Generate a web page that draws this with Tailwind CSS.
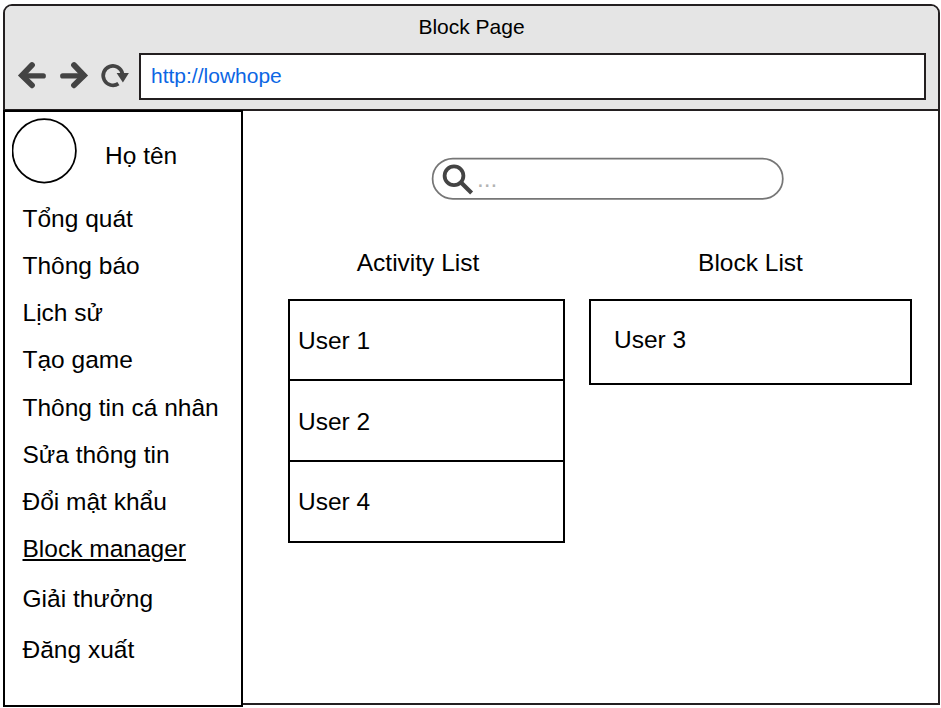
<!DOCTYPE html>
<html lang="vi">
<head>
<meta charset="utf-8">
<title>Block Page</title>
<script src="https://cdn.jsdelivr.net/npm/@tailwindcss/browser@4"></script>
</head>
<body class="w-[941px] h-[708px] overflow-hidden bg-white text-black font-['Liberation_Sans',Arial,sans-serif] text-[24.5px]">
<div class="w-[941px] h-[708px] pl-[3px] pt-[4px]">
  <div class="w-[937px] h-[701px] border-2 border-[#231f20] rounded-t-[9px] flex flex-col">
    <header class="h-[105px] shrink-0 bg-[#e5e5e5] border-b-2 border-[#231f20] rounded-t-[7px]">
      <h1 class="h-[47px] pt-[6px] text-center text-[21px] leading-[30px]">Block Page</h1>
      <div class="flex h-[47px] pl-[12px]">
        <svg class="w-[122px] h-[47px] shrink-0" viewBox="17 53 122 47" fill="none" stroke="#444" stroke-width="5.8" stroke-linecap="round" stroke-linejoin="miter">
          <path d="M32 65.1L22 75.5L32 85.3"/>
          <path d="M43.3 75.9H23" stroke-width="5.2"/>
          <path d="M74 65.1L84 75.5L74 85.3"/>
          <path d="M62.7 75.9H83" stroke-width="5.2"/>
          <path d="M118.4 83.6A9.7 9.7 0 1 1 122.4 73.6" stroke-width="3.7" stroke-linecap="butt"/>
          <path d="M116.6 73.1H128.9L122.9 82.4Z" fill="#444" stroke="none"/>
        </svg>
        <div class="w-[787px] h-[47px] bg-white border-2 border-[#231f20] pl-[10px] leading-[41px] text-[21px] text-[#0c66e4]">http://lowhope</div>
      </div>
    </header>
    <div class="flex grow min-h-0">
      <aside class="-ml-[2px] w-[240px] h-[597px] shrink-0 -mt-px border-2 border-black bg-white">
        <div class="flex h-[83px] pl-[7px] pt-[6px]">
          <svg class="w-[66px] h-[66px]" viewBox="0 0 66 66"><circle cx="32.2" cy="32.8" r="31.7" fill="none" stroke="#000" stroke-width="1.75"/></svg>
          <span class="ml-[27px] mt-[23px] leading-[30px]">Họ tên</span>
        </div>
        <nav class="flex flex-col pl-[17.5px] leading-[47px] whitespace-nowrap">
          <a>Tổng quát</a>
          <a>Thông báo</a>
          <a>Lịch sử</a>
          <a>Tạo game</a>
          <a class="mt-px">Thông tin cá nhân</a>
          <a>Sửa thông tin</a>
          <a>Đổi mật khẩu</a>
          <a class="underline">Block manager</a>
          <a class="mt-[3px]">Giải thưởng</a>
          <a class="mt-[4px]">Đăng xuất</a>
        </nav>
      </aside>
      <main class="grow pl-[45px] pt-[46px]">
        <div class="ml-[143px] w-[353px] h-[43px] grid">
          <svg class="col-start-1 row-start-1 w-[353px] h-[43px]" viewBox="431 157 353 43" fill="none">
            <rect x="432.6" y="158.5" width="350.2" height="40.4" rx="20.2" stroke="#767676" stroke-width="1.75"/>
            <circle cx="454" cy="175.8" r="9.4" stroke="#444" stroke-width="3.8"/>
            <path d="M461.3 182.7L471.6 193" stroke="#444" stroke-width="4.2"/>
          </svg>
          <span class="col-start-1 row-start-1 pl-[46px] pt-[7px] text-[24.5px] leading-[30px] text-[#b3b3b3]">...</span>
        </div>
        <div class="flex mt-[48px] gap-[24px]">
          <section class="w-[277px]">
            <h2 class="text-center leading-[30px] mb-[21px] pr-[17px]">Activity List</h2>
            <ul class="leading-[80px]">
              <li class="h-[82px] border-2 pl-[8px]">User 1</li>
              <li class="h-[83px] -mt-[2px] border-2 pl-[8px] leading-[82px]">User 2</li>
              <li class="h-[83px] -mt-[2px] border-2 pl-[8px]">User 4</li>
            </ul>
          </section>
          <section class="w-[323px]">
            <h2 class="text-center leading-[30px] mb-[21px]">Block List</h2>
            <div class="h-[86px] border-2 pl-[23px] leading-[78px]">User 3</div>
          </section>
        </div>
      </main>
    </div>
  </div>
</div>
</body>
</html>
